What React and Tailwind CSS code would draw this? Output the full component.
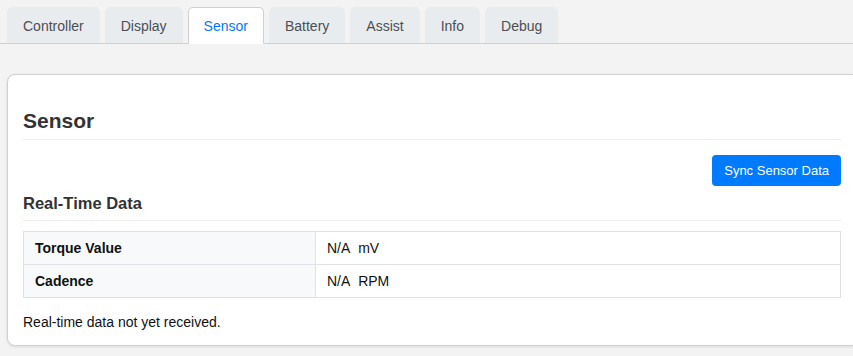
import React, { useState } from "react";

const tabs = ["Controller", "Display", "Sensor", "Battery", "Assist", "Info", "Debug"];

const rows = [
  { label: "Torque Value", value: "N/A", unit: "mV" },
  { label: "Cadence", value: "N/A", unit: "RPM" },
];

export default function App() {
  const [active, setActive] = useState("Sensor");

  return (
    <div className="min-h-[356px] overflow-hidden bg-[#f3f3f3] font-['Liberation_Sans',Arial,sans-serif] text-[#333] text-[14px]">
      {/* Tabs */}
      <div className="pt-[7px] pl-[7px] flex gap-[5px] border-b border-[#cfcfcf] h-[44px]">
        {tabs.map((t) => (
          <button
            key={t}
            onClick={() => setActive(t)}
            className={
              t === active
                ? "h-[37px] pt-[2px] px-[15px] rounded-t-[5px] bg-white border border-[#cfcfcf] border-b-white text-[#007bff] text-[14px]"
                : "h-[36px] pt-[2px] px-4 rounded-t-[5px] bg-[#e9ecef] text-[#4a4f55] text-[14px]"
            }
          >
            {t}
          </button>
        ))}
      </div>

      {/* Card */}
      <div className="mt-[30px] ml-[7px] w-[852px] bg-white border border-[#d0d0d0] rounded-[8px] shadow-[0_1px_3px_rgba(0,0,0,0.1)] pl-[15px] pr-[17px] pt-[34px] pb-[14px]">
        <h2 className="text-[21px] leading-[24px] font-bold text-[#333] pb-[6px] border-b border-[#eeeeee]">
          Sensor
        </h2>

        <div className="flex justify-end mt-[15px]">
          <button className="h-[31px] px-[12px] rounded-[4px] bg-[#007bff] text-white text-[13px]">
            Sync Sensor Data
          </button>
        </div>

        <h3 className="mt-[6px] text-[16.5px] leading-[22px] font-bold text-[#333] pb-[6px] border-b border-[#eeeeee]">
          Real-Time Data
        </h3>

        <table className="mt-[10px] w-full border-collapse text-[14px] text-[#111]">
          <tbody>
            {rows.map((r) => (
              <tr key={r.label}>
                <td className="w-[292px] h-[33px] px-[11px] font-bold bg-[#f8f9fa] border border-[#dee2e6]">
                  {r.label}
                </td>
                <td className="h-[33px] px-[11px] border border-[#dee2e6]">
                  {r.value}&nbsp;&nbsp;{r.unit}
                </td>
              </tr>
            ))}
          </tbody>
        </table>

        <p className="mt-[15px] text-[14px] leading-[18px] text-[#111]">Real-time data not yet received.</p>
      </div>
    </div>
  );
}
